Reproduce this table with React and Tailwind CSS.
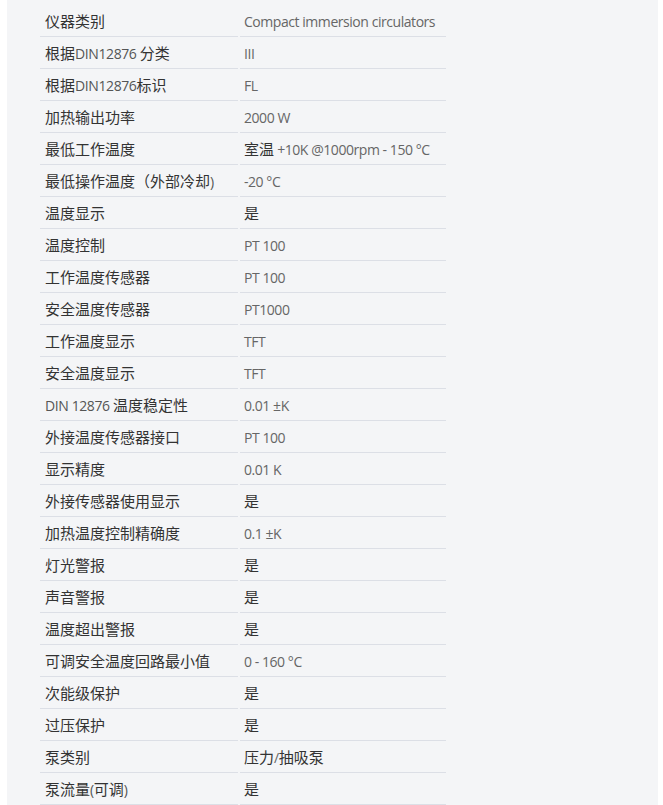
import React from 'react';

const rows = [
  ['仪器类别', 'Compact immersion circulators'],
  ['根据DIN12876 分类', 'III'],
  ['根据DIN12876标识', 'FL'],
  ['加热输出功率', '2000 W'],
  ['最低工作温度', '室温 +10K @1000rpm - 150 °C'],
  ['最低操作温度（外部冷却)', '-20 °C'],
  ['温度显示', '是'],
  ['温度控制', 'PT 100'],
  ['工作温度传感器', 'PT 100'],
  ['安全温度传感器', 'PT1000'],
  ['工作温度显示', 'TFT'],
  ['安全温度显示', 'TFT'],
  ['DIN 12876 温度稳定性', '0.01 ±K'],
  ['外接温度传感器接口', 'PT 100'],
  ['显示精度', '0.01 K'],
  ['外接传感器使用显示', '是'],
  ['加热温度控制精确度', '0.1 ±K'],
  ['灯光警报', '是'],
  ['声音警报', '是'],
  ['温度超出警报', '是'],
  ['可调安全温度回路最小值', '0 - 160 °C'],
  ['次能级保护', '是'],
  ['过压保护', '是'],
  ['泵类别', '压力/抽吸泵'],
  ['泵流量(可调)', '是'],
];

// CJK runs render larger and darker than the latin text in the original
const Mixed = ({ text, latin }) =>
  text.split(/([\u3000-\u9fff\uff00-\uffef]+)/).map((part, i) =>
    /[\u3000-\u9fff\uff00-\uffef]/.test(part) ? (
      <span key={i} className="text-[15px] text-[#333]">
        {part}
      </span>
    ) : (
      <span key={i} className={latin}>
        {part}
      </span>
    )
  );

const App = () => {
  return (
    <div
      className="min-h-screen bg-white"
      style={{ fontFamily: '"Open Sans", "Noto Sans CJK SC", sans-serif' }}
    >
      <div className="ml-[7px] w-[651px] bg-[#f4f5f7] pt-[5px] pl-[33px] min-h-[805px]">
        {rows.map(([label, value]) => (
          <div key={label} className="flex gap-[2px]">
            <div className="w-[198px] h-8 border-b border-[#dcdfe6] pl-[5px] flex items-center whitespace-nowrap">
              <span>
                <Mixed text={label} latin="text-[14px] tracking-[-0.4px] text-[#555]" />
              </span>
            </div>
            <div className="w-[206px] h-8 border-b border-[#dcdfe6] pl-[4px] flex items-center whitespace-nowrap">
              <span>
                <Mixed text={value} latin="text-[14px] tracking-[-0.45px] text-[#666]" />
              </span>
            </div>
          </div>
        ))}
      </div>
    </div>
  );
};

export default App;
